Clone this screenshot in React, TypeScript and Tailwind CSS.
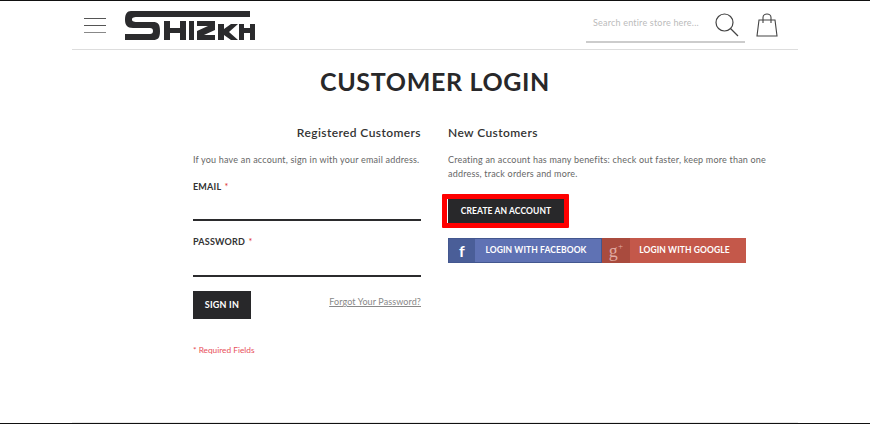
const font = { fontFamily: "Lato, 'Open Sans', sans-serif" };

function Logo() {
  return (
    <svg className="mt-[2px]" width="132" height="32" viewBox="124 10 132 32" fill="#2b2b2d">
      <path d="M131 11H250V17H137C133 17 132 18 132 19.500C132 21 133 22 137 22H153C158 22 160 24 160 31C160 38 158 40 153 40H125V34H150C152 34 153 33 153 31C153 29 152 28 150 28H133C127 28 125 25 125 19.500C125 14 127 11 131 11Z" />
      <path d="M164 21H170V28H180V21H186V40H180V33H170V40H164Z" />
      <rect x="189" y="21" width="5" height="19" />
      <path d="M197 21H215V30L204 35H215V40H197V31L208 26H197Z" />
      <path d="M218 24H224V29L231 24H238L229 32L238 40H231L224 35V40H218Z" />
      <path d="M239 24H244V28H250V24H255V40H250V33H244V40H239Z" />
    </svg>
  );
}

function Header() {
  return (
    <header className="flex h-[48px] items-center justify-between pl-3 pr-[20px]">
      <div className="flex items-center">
        <div className="mt-[1px] flex w-[40px] flex-col gap-[6px]">
          <span className="block h-px w-[22px] bg-[#555]" />
          <span className="block h-px w-[22px] bg-[#555]" />
          <span className="block h-px w-[22px] bg-[#888]" />
        </div>
        <Logo />
      </div>
      <div className="flex items-center">
        <div className="mb-[6px] flex h-[42px] w-[159px] items-center border-b-2 border-[#ccc] pt-1 pl-[7px] text-[9px] tracking-[0.2px] text-[#bbb]">
          Search entire store here...
        </div>
        <svg className="-ml-[30px]" width="24" height="24" viewBox="0 0 24 24" fill="none" stroke="#444" strokeWidth="1.200">
          <circle cx="9.500" cy="9.500" r="8.500" />
          <path d="M15.500 15.500L23 23" />
        </svg>
        <svg className="ml-[17px]" width="22" height="24" viewBox="0 0 22 24" fill="none" stroke="#444" strokeWidth="1.100">
          <path d="M3 7H19L21 23H1Z" />
          <path d="M7 10V4.500C7 2.500 9 1 11 1C13 1 15 2.500 15 4.500V10" />
        </svg>
      </div>
    </header>
  );
}

function RegisteredCustomers() {
  return (
    <section className="flex w-[228px] flex-col">
      <h2 className="text-right text-[12px] leading-[18px] font-semibold tracking-[0.4px] text-[#333]">Registered Customers</h2>
      <p className="mt-[11px] text-[9px] leading-[14px] tracking-[0.2px] whitespace-nowrap text-[#666]">
        If you have an account, sign in with your email address.
      </p>
      <label className="mt-[13px] text-[9px] leading-[14px] font-bold tracking-[0.2px] text-[#333]">
        EMAIL <span className="ml-[1px] font-normal text-[#e02b27]">*</span>
      </label>
      <div className="mt-[25px] h-[2px] bg-[#2b2b2d]" />
      <label className="mt-[14px] text-[9px] leading-[14px] font-bold tracking-[0.2px] text-[#333]">
        PASSWORD <span className="ml-[1px] font-normal text-[#e02b27]">*</span>
      </label>
      <div className="mt-[26px] h-[2px] bg-[#2b2b2d]" />
      <div className="mt-[14px] flex items-start justify-between">
        <button className="h-[28px] w-[58px] bg-[#28282a] text-[9px] font-bold tracking-[0.2px] text-white">SIGN IN</button>
        <a className="mt-[4px] text-[9px] leading-[14px] tracking-[0.1px] text-[#888] underline">Forgot Your Password?</a>
      </div>
      <p className="mt-[25px] text-[8.300px] leading-[12px] text-[#e8505a]">* Required Fields</p>
    </section>
  );
}

function NewCustomers() {
  return (
    <section className="flex w-[325px] flex-col">
      <h2 className="text-[12px] leading-[18px] font-semibold tracking-[0.4px] text-[#333]">New Customers</h2>
      <p className="mt-[11px] text-[9px] leading-[14px] tracking-[0.2px] text-[#666]">
        Creating an account has many benefits: check out faster, keep more than one address, track orders and more.
      </p>
      <div className="-ml-[6px] mt-[13px] w-[127px] rounded-[1px] border-[5px] border-[#f00] bg-white pl-[1px]">
        <button className="block h-[24px] w-full bg-[#28282a] text-[8.500px] font-bold tracking-[0.1px] text-white">CREATE AN ACCOUNT</button>
      </div>
      <div className="mt-[10px] flex h-[25px] w-[298px] text-[8.500px] font-bold tracking-[0.1px] text-white">
        <div className="flex w-[154px] border border-[#43578f] bg-[#5f72b4]">
          <span className="flex w-[26px] items-center justify-center bg-[#4a5e98] text-[16px] leading-none font-bold">f</span>
          <span className="flex flex-1 items-center justify-center pr-1">LOGIN WITH FACEBOOK</span>
        </div>
        <div className="flex flex-1 bg-[#c4584a]">
          <span className="flex w-[28px] items-center justify-center bg-[#a94b3e] text-[18px] leading-none font-normal text-[#e0aaa2]" style={{ fontFamily: "'Liberation Serif', serif" }}>
            g<sup className="text-[9px]">+</sup>
          </span>
          <span className="flex flex-1 items-center justify-center pr-[7px]">LOGIN WITH GOOGLE</span>
        </div>
      </div>
    </section>
  );
}

export default function App() {
  return (
    <div className="flex h-[424px] flex-col overflow-hidden border-y border-[#111] bg-white" style={font}>
      <div className="mx-[72px] flex flex-1 flex-col border-b border-[#e8e8e8]">
        <div className="border-b border-[#ddd]">
          <Header />
        </div>
        <h1 className="mt-[14px] text-center text-[25px] leading-[34px] font-bold tracking-[0.65px] text-[#28282a]">CUSTOMER LOGIN</h1>
        <main className="mt-[26px] flex gap-[27px] pl-[121px]">
          <RegisteredCustomers />
          <NewCustomers />
        </main>
      </div>
    </div>
  );
}
